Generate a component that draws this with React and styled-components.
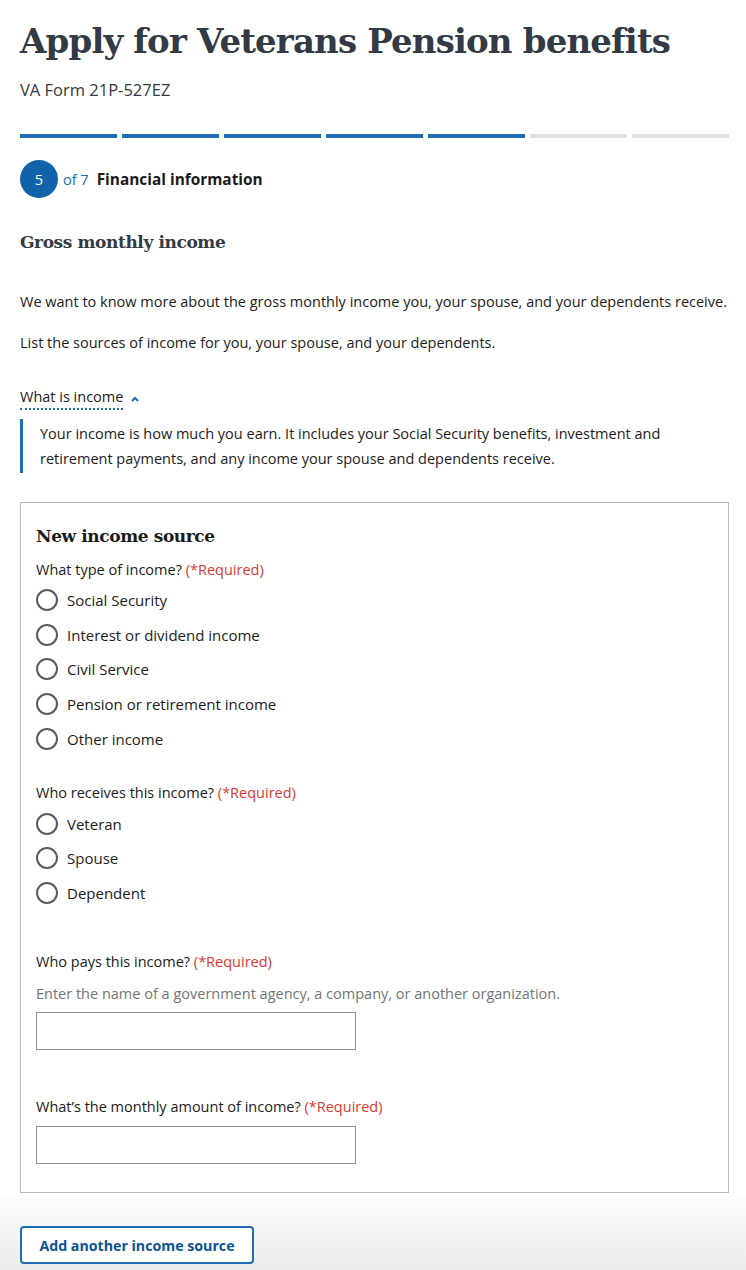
import React from "react";
import styled, { createGlobalStyle } from "styled-components";

const Global = createGlobalStyle`
  html, body { margin: 0; padding: 0; }
  body {
    font-family: "Open Sans", "Liberation Sans", sans-serif;
    color: #1b1b1b;
    background: #fff;
  }
  * { box-sizing: border-box; }
`;

const Page = styled.div`
  min-height: 1270px;
  padding: 18px 17px 6px 20px;
  background: linear-gradient(to bottom, #fff 0px, #fff 1193px, #fdfdfd 1196px, #ebebeb 1270px);
`;

const Title = styled.h1`
  margin: 0;
  font-family: "DejaVu Serif", serif;
  font-weight: 700;
  font-size: 34px;
  line-height: 46px;
  color: #323a45;
  letter-spacing: -0.85px;
`;

const Subtitle = styled.div`
  margin-top: 16px;
  font-size: 16.5px;
  line-height: 20px;
  color: #323a45;
`;

const Progress = styled.div`
  display: grid;
  grid-template-columns: repeat(7, 1fr);
  gap: 5px;
  margin-top: 34px;
`;

const Segment = styled.div`
  height: 4px;
  background: ${(p) => (p.$done ? "#1a6fb5" : "#dfe1e2")};
`;

const StepRow = styled.div`
  display: flex;
  align-items: center;
  margin-top: 22px;
`;

const StepCircle = styled.div`
  width: 38px;
  height: 38px;
  border-radius: 50%;
  background: #1162a8;
  color: #fff;
  display: flex;
  align-items: center;
  justify-content: center;
  font-size: 14.5px;
`;

const StepOf = styled.span`
  margin-left: 5px;
  color: #1a6fb5;
  font-size: 14.5px;
`;

const StepName = styled.span`
  margin-left: 8px;
  font-weight: 700;
  font-size: 15.4px;
  color: #1b1b1b;
`;

const SectionTitle = styled.h2`
  margin: 32px 0 0;
  font-family: "DejaVu Serif", serif;
  font-weight: 700;
  font-size: 17px;
  line-height: 24px;
  color: #323a45;
  letter-spacing: -0.4px;
`;

const Para = styled.p`
  margin: ${(p) => p.$mt || 0}px 0 0;
  font-size: 14.5px;
  line-height: 20px;
  color: #1b1b1b;
`;

const Toggle = styled.div`
  margin-top: 34px;
  display: flex;
  align-items: center;
  gap: 7px;
  font-size: 14.5px;
  line-height: 20px;
`;

const ToggleText = styled.span`
  border-bottom: 2px dotted #1a6fb5;
  padding-bottom: 1px;
`;

const Quote = styled.div`
  margin-top: 9px;
  border-left: 3px solid #1a6fb5;
  padding: 2px 0 2px 17px;
  font-size: 14.5px;
  line-height: 25px;
  max-width: 662px;
`;

const Card = styled.div`
  margin-top: 29px;
  border: 1px solid #b8bcbf;
  padding: 19px 15px 28px;
`;

const CardTitle = styled.h3`
  margin: 0;
  font-family: "DejaVu Serif", serif;
  font-weight: 700;
  font-size: 17px;
  line-height: 28px;
  color: #1b1b1b;
  letter-spacing: -0.4px;
`;

const Label = styled.div`
  margin-top: ${(p) => p.$mt || 0}px;
  font-size: 14.5px;
  line-height: 20px;
  color: #1b1b1b;
`;

const Req = styled.span`
  color: #d83933;
`;

const Options = styled.div`
  display: flex;
  flex-direction: column;
  gap: 12.7px;
  margin-top: ${(p) => p.$mt || 9}px;
`;

const Option = styled.label`
  display: flex;
  align-items: center;
  gap: 9px;
  font-size: 15px;
  line-height: 22px;
  color: #1b1b1b;
`;

const Radio = styled.span`
  width: 22px;
  height: 22px;
  border-radius: 50%;
  border: 2px solid #565c65;
  background: #fff;
  flex: none;
`;

const Hint = styled.div`
  margin-top: 12px;
  font-size: 14.5px;
  line-height: 20px;
  color: #71767a;
`;

const Input = styled.div`
  margin-top: ${(p) => p.$mt || 0}px;
  width: 320px;
  height: 38px;
  border: 1px solid #8d9297;
  background: #fff;
`;

const Button = styled.button`
  margin-top: 33px;
  width: 234px;
  height: 38px;
  border: 2px solid #1a6fb5;
  border-radius: 4px;
  background: #fff;
  color: #0b5497;
  font-family: "Open Sans", "Liberation Sans", sans-serif;
  font-weight: 700;
  font-size: 14.2px;
  padding: 0;
`;

function Chevron() {
  return (
    <svg width="10" height="8" viewBox="0 0 10 8">
      <path d="M2 6 L5 3 L8 6" fill="none" stroke="#1a6fb5" strokeWidth="2" />
    </svg>
  );
}

function RadioGroup({ items, mt }) {
  return (
    <Options $mt={mt}>
      {items.map((t) => (
        <Option key={t}>
          <Radio />
          {t}
        </Option>
      ))}
    </Options>
  );
}

export default function App() {
  return (
    <>
      <Global />
      <Page>
        <Title>Apply for Veterans Pension benefits</Title>
        <Subtitle>VA Form 21P-527EZ</Subtitle>
        <Progress>
          {[1, 2, 3, 4, 5, 6, 7].map((i) => (
            <Segment key={i} $done={i <= 5} />
          ))}
        </Progress>
        <StepRow>
          <StepCircle>5</StepCircle>
          <StepOf>of 7</StepOf>
          <StepName>Financial information</StepName>
        </StepRow>
        <SectionTitle>Gross monthly income</SectionTitle>
        <Para $mt={38}>
          We want to know more about the gross monthly income you, your spouse, and your dependents receive.
        </Para>
        <Para $mt={21}>List the sources of income for you, your spouse, and your dependents.</Para>
        <Toggle>
          <ToggleText>What is income</ToggleText>
          <Chevron />
        </Toggle>
        <Quote>
          Your income is how much you earn. It includes your Social Security benefits, investment and
          retirement payments, and any income your spouse and dependents receive.
        </Quote>
        <Card>
          <CardTitle>New income source</CardTitle>
          <Label $mt={10}>
            What type of income? <Req>(*Required)</Req>
          </Label>
          <RadioGroup
            mt={9}
            items={[
              "Social Security",
              "Interest or dividend income",
              "Civil Service",
              "Pension or retirement income",
              "Other income",
            ]}
          />
          <Label $mt={33}>
            Who receives this income? <Req>(*Required)</Req>
          </Label>
          <RadioGroup mt={10} items={["Veteran", "Spouse", "Dependent"]} />
          <Label $mt={48}>
            Who pays this income? <Req>(*Required)</Req>
          </Label>
          <Hint>Enter the name of a government agency, a company, or another organization.</Hint>
          <Input $mt={8} />
          <Label $mt={47}>
            What’s the monthly amount of income? <Req>(*Required)</Req>
          </Label>
          <Input $mt={9} />
        </Card>
        <Button>Add another income source</Button>
      </Page>
    </>
  );
}
